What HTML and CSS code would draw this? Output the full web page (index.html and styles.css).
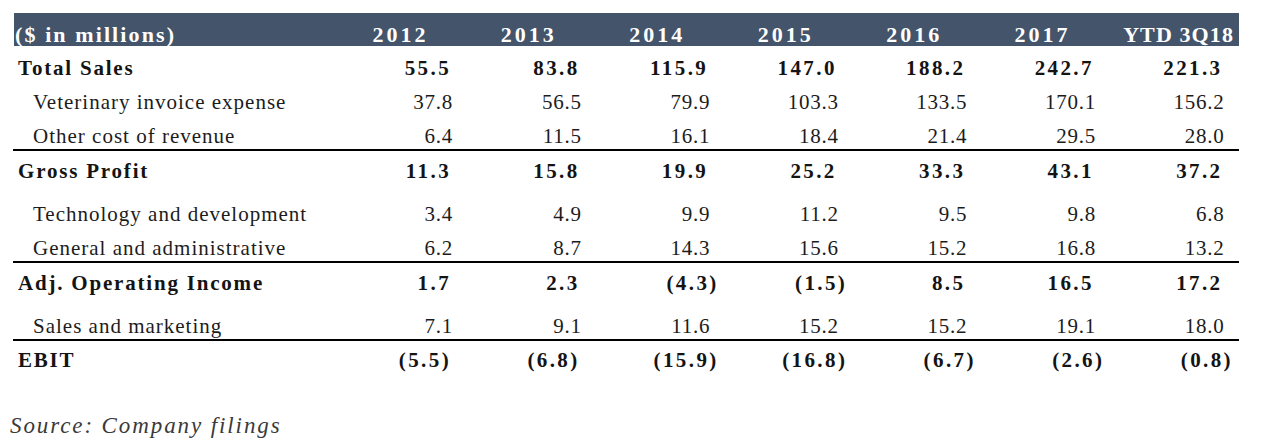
FILE: index.html
```html
<!DOCTYPE html>
<html>
<head>
<meta charset="utf-8">
<link rel="stylesheet" href="styles.css">
</head>
<body>
<div class="wrap">
  <div class="table">
    <div class="row head">
      <div class="label">($ in millions)</div>
      <div class="yr">2012</div>
      <div class="yr">2013</div>
      <div class="yr">2014</div>
      <div class="yr">2015</div>
      <div class="yr">2016</div>
      <div class="yr">2017</div>
      <div class="yr ytd">YTD 3Q18</div>
    </div>
    <div class="row major first">
      <div class="label">Total Sales</div>
      <div class="num">55.5</div><div class="num">83.8</div><div class="num">115.9</div><div class="num">147.0</div><div class="num">188.2</div><div class="num">242.7</div><div class="num">221.3</div>
    </div>
    <div class="row minor">
      <div class="label">Veterinary invoice expense</div>
      <div class="num">37.8</div><div class="num">56.5</div><div class="num">79.9</div><div class="num">103.3</div><div class="num">133.5</div><div class="num">170.1</div><div class="num">156.2</div>
    </div>
    <div class="row minor rule">
      <div class="label">Other cost of revenue</div>
      <div class="num">6.4</div><div class="num">11.5</div><div class="num">16.1</div><div class="num">18.4</div><div class="num">21.4</div><div class="num">29.5</div><div class="num">28.0</div>
    </div>
    <div class="row major">
      <div class="label">Gross Profit</div>
      <div class="num">11.3</div><div class="num">15.8</div><div class="num">19.9</div><div class="num">25.2</div><div class="num">33.3</div><div class="num">43.1</div><div class="num">37.2</div>
    </div>
    <div class="row minor">
      <div class="label">Technology and development</div>
      <div class="num">3.4</div><div class="num">4.9</div><div class="num">9.9</div><div class="num">11.2</div><div class="num">9.5</div><div class="num">9.8</div><div class="num">6.8</div>
    </div>
    <div class="row minor rule">
      <div class="label">General and administrative</div>
      <div class="num">6.2</div><div class="num">8.7</div><div class="num">14.3</div><div class="num">15.6</div><div class="num">15.2</div><div class="num">16.8</div><div class="num">13.2</div>
    </div>
    <div class="row major">
      <div class="label">Adj. Operating Income</div>
      <div class="num">1.7</div><div class="num">2.3</div><div class="num hang">(4.3)</div><div class="num hang">(1.5)</div><div class="num">8.5</div><div class="num">16.5</div><div class="num">17.2</div>
    </div>
    <div class="row minor rule">
      <div class="label">Sales and marketing</div>
      <div class="num">7.1</div><div class="num">9.1</div><div class="num">11.6</div><div class="num">15.2</div><div class="num">15.2</div><div class="num">19.1</div><div class="num">18.0</div>
    </div>
    <div class="row major last">
      <div class="label">EBIT</div>
      <div class="num">(5.5)</div><div class="num">(6.8)</div><div class="num hang">(15.9)</div><div class="num hang">(16.8)</div><div class="num hang">(6.7)</div><div class="num hang">(2.6)</div><div class="num hang">(0.8)</div>
    </div>
  </div>
  <div class="source">Source: Company filings</div>
</div>
</body>
</html>
```

FILE: styles.css
```css
html, body {
  margin: 0;
  padding: 0;
  background: #ffffff;
  font-family: "Liberation Serif", serif;
}

.wrap {
  padding: 13px 0 0 13px;
  color: #141414;
}

.table {
  width: 1226px;
}

.row {
  display: grid;
  grid-template-columns: 326px repeat(7, 1fr);
  line-height: 23px;
  white-space: nowrap;
  font-family: "Liberation Serif", serif;
}

.row .num {
  text-align: right;
}

/* header bar */
.row.head {
  background: #44546a;
  color: #ffffff;
  font-weight: bold;
  font-size: 22px;
  height: 33px;
  box-sizing: border-box;
  padding-top: 10px;
  margin-left: 1px;
}

.row.head .label {
  padding-left: 1px;
  letter-spacing: 2.1px;
}

.row.head .yr {
  text-align: right;
  padding-right: 40px;
  letter-spacing: 3px;
}

.row.head .yr.ytd {
  padding-right: 5px;
  letter-spacing: 1.1px;
}

/* bold summary rows */
.row.major {
  font-weight: bold;
  font-size: 21px;
  padding: 9px 0 10px;
}

.row.major.first {
  padding: 11px 0 1px;
}

.row.major.last {
  padding: 8px 0 0;
}

.row.major .label {
  padding-left: 5px;
  letter-spacing: 1.8px;
}

.row.major .num {
  padding-right: 16.5px;
  letter-spacing: 2.4px;
}

.row.major .num.hang {
  padding-right: 6px;
}

/* detail rows */
.row.minor {
  font-size: 21px;
  padding: 10px 0 1px;
  color: #1c1c1c;
}

.row.minor .label {
  padding-left: 20px;
  letter-spacing: 1px;
}

.row.minor .num {
  padding-right: 14.5px;
  letter-spacing: 0.75px;
}

.row.rule {
  border-bottom: 2px solid #000000;
}

.source {
  margin-top: 41px;
  margin-left: -3px;
  font-family: "Liberation Serif", serif;
  font-style: italic;
  font-size: 23px;
  line-height: 26px;
  letter-spacing: 1.9px;
  color: #3a3a3a;
}
```
